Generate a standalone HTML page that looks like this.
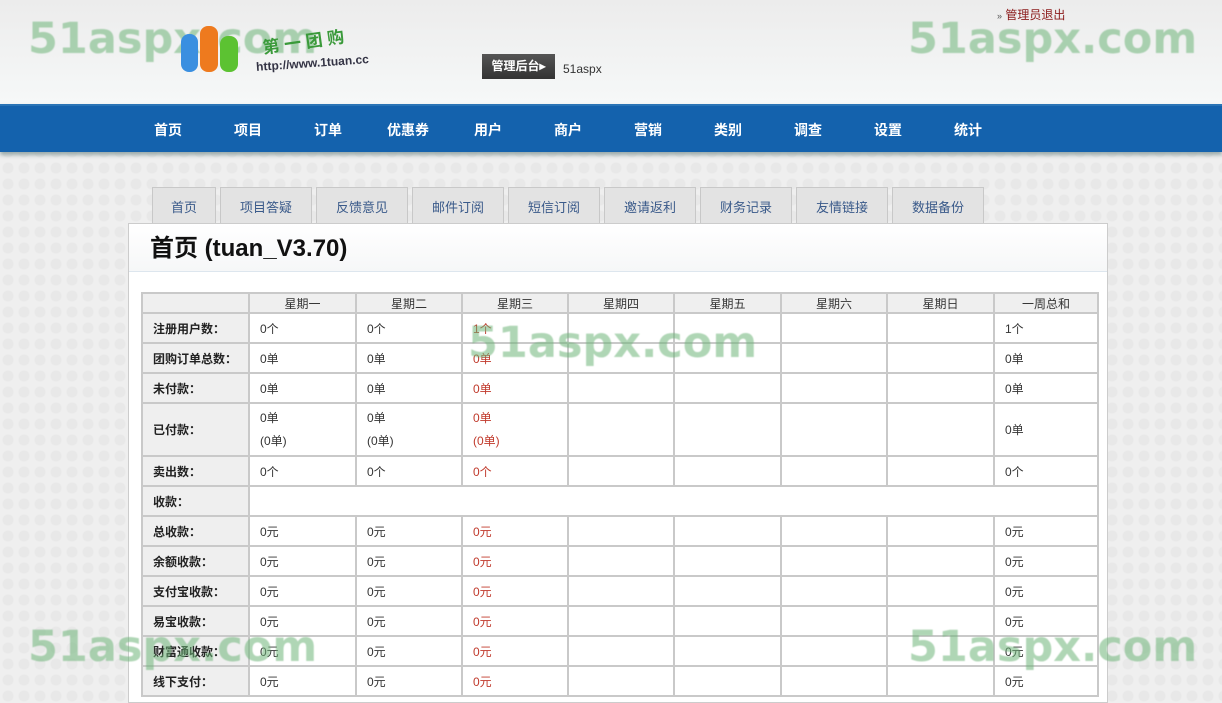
<!DOCTYPE html>
<html><head><meta charset="utf-8"><style>
*{margin:0;padding:0;box-sizing:border-box}
body{width:1222px;height:690px;overflow:hidden;position:relative;font-family:"Liberation Sans","Noto Sans CJK SC",sans-serif;font-size:12px;color:#333;
background-color:#efefef;background-image:radial-gradient(circle,#e8e8e8 5px,transparent 6px);background-size:16px 16px;}
#hd{position:absolute;left:0;top:0;width:1222px;height:104px;background:linear-gradient(#ececec,#f6f8f8)}
#nav{position:absolute;left:0;top:104px;width:1222px;height:48px;background:#1462ad;border-top:2px solid #2a74b6;box-shadow:0 3px 4px #9aa}
#nav span{position:absolute;top:14px;color:#fff;font-weight:bold;font-size:14px;transform:translateX(-50%)}
.wm{position:absolute;font-family:"DejaVu Sans",sans-serif;font-weight:bold;font-size:43px;color:rgba(110,180,120,.55);filter:blur(.6px)}
.tab{position:absolute;top:187px;height:37px;background:#e3e3e3;border:1px solid #c8c8c8;border-bottom:none;color:#3a5a8a;font-size:13px;text-align:center;line-height:40px}
#box{position:absolute;left:128px;top:223px;width:980px;height:480px;background:#fff;border:1px solid #ccc}
#title{height:48px;background:linear-gradient(#fff,#f6f7f8);border-bottom:1px solid #dde6ee;font-size:24px;font-weight:bold;color:#111;padding:4px 0 0 21px}
table{position:absolute;left:12px;top:68px;border-collapse:collapse;table-layout:fixed;width:956px}
td{border:2px solid #c9c9c9;height:30px;padding-left:10px;font-size:12px;color:#333}
td.h{background:#efefef;font-weight:bold;color:#222}
tr.th td{height:20px;background:#efefef;text-align:center;padding:0;color:#333}
.r{color:#c0392b}
</style></head><body>
<div id="hd"></div>
<div class="wm" style="left:28px;top:14px">51aspx.com</div>
<div class="wm" style="left:908px;top:14px">51aspx.com</div>
<div style="position:absolute;left:181px;top:34px;width:17px;height:38px;border-radius:8px;background:#3a8fe0"></div>
<div style="position:absolute;left:200px;top:26px;width:18px;height:46px;border-radius:8px;background:#ee7a1e"></div>
<div style="position:absolute;left:220px;top:36px;width:18px;height:36px;border-radius:8px;background:#5cc232"></div>
<div style="position:absolute;left:262px;top:28px;color:#3a9a3a;font-weight:bold;font-size:17px;transform:rotate(-8deg)">第 一 团 购</div>
<div style="position:absolute;left:256px;top:56px;color:#334;font-weight:bold;font-size:12px;transform:rotate(-4deg)">http://www.1tuan.cc</div>
<div style="position:absolute;left:482px;top:54px;width:73px;height:25px;background:linear-gradient(#555,#333);color:#fff;font-weight:bold;font-size:12px;line-height:25px;text-align:center">管理后台▸</div>
<div style="position:absolute;left:563px;top:62px;font-size:12px;color:#333">51aspx</div>
<div style="position:absolute;left:997px;top:6px;font-size:12px;color:#8b1a1a"><span style="color:#555;font-size:9px">»</span> 管理员退出</div>
<div id="nav"><span style="left:168px">首页</span><span style="left:248px">项目</span><span style="left:328px">订单</span><span style="left:408px">优惠券</span><span style="left:488px">用户</span><span style="left:568px">商户</span><span style="left:648px">营销</span><span style="left:728px">类别</span><span style="left:808px">调查</span><span style="left:888px">设置</span><span style="left:968px">统计</span></div>
<div class="tab" style="left:152px;width:64px">首页</div>
<div class="tab" style="left:220px;width:92px">项目答疑</div>
<div class="tab" style="left:316px;width:92px">反馈意见</div>
<div class="tab" style="left:412px;width:92px">邮件订阅</div>
<div class="tab" style="left:508px;width:92px">短信订阅</div>
<div class="tab" style="left:604px;width:92px">邀请返利</div>
<div class="tab" style="left:700px;width:92px">财务记录</div>
<div class="tab" style="left:796px;width:92px">友情链接</div>
<div class="tab" style="left:892px;width:92px">数据备份</div>
<div id="box"><div id="title">首页 (tuan_V3.70)</div>
<table>
<colgroup><col style="width:107px"><col style="width:107px"><col style="width:106px"><col style="width:106px"><col style="width:106px"><col style="width:107px"><col style="width:106px"><col style="width:107px"><col style="width:104px"></colgroup>
<tr class="th"><td></td><td>星期一</td><td>星期二</td><td class="r">星期三</td><td>星期四</td><td>星期五</td><td>星期六</td><td>星期日</td><td>一周总和</td></tr>
<tr><td class="h">注册用户数：</td><td>0个</td><td>0个</td><td class="r">1个</td><td></td><td></td><td></td><td></td><td>1个</td></tr>
<tr><td class="h">团购订单总数：</td><td>0单</td><td>0单</td><td class="r">0单</td><td></td><td></td><td></td><td></td><td>0单</td></tr>
<tr><td class="h">未付款：</td><td>0单</td><td>0单</td><td class="r">0单</td><td></td><td></td><td></td><td></td><td>0单</td></tr>
<tr><td class="h" style="height:53px">已付款：</td><td style="line-height:23px">0单<br>(0单)</td><td style="line-height:23px">0单<br>(0单)</td><td class="r" style="line-height:23px">0单<br>(0单)</td><td></td><td></td><td></td><td></td><td>0单</td></tr>
<tr><td class="h">卖出数：</td><td>0个</td><td>0个</td><td class="r">0个</td><td></td><td></td><td></td><td></td><td>0个</td></tr>
<tr><td class="h">收款：</td><td colspan="8"></td></tr>
<tr><td class="h">总收款：</td><td>0元</td><td>0元</td><td class="r">0元</td><td></td><td></td><td></td><td></td><td>0元</td></tr>
<tr><td class="h">余额收款：</td><td>0元</td><td>0元</td><td class="r">0元</td><td></td><td></td><td></td><td></td><td>0元</td></tr>
<tr><td class="h">支付宝收款：</td><td>0元</td><td>0元</td><td class="r">0元</td><td></td><td></td><td></td><td></td><td>0元</td></tr>
<tr><td class="h">易宝收款：</td><td>0元</td><td>0元</td><td class="r">0元</td><td></td><td></td><td></td><td></td><td>0元</td></tr>
<tr><td class="h">财富通收款：</td><td>0元</td><td>0元</td><td class="r">0元</td><td></td><td></td><td></td><td></td><td>0元</td></tr>
<tr><td class="h">线下支付：</td><td>0元</td><td>0元</td><td class="r">0元</td><td></td><td></td><td></td><td></td><td>0元</td></tr>
</table></div>
<div class="wm" style="left:468px;top:318px">51aspx.com</div>
<div class="wm" style="left:28px;top:622px">51aspx.com</div>
<div class="wm" style="left:908px;top:622px">51aspx.com</div>
</body></html>
